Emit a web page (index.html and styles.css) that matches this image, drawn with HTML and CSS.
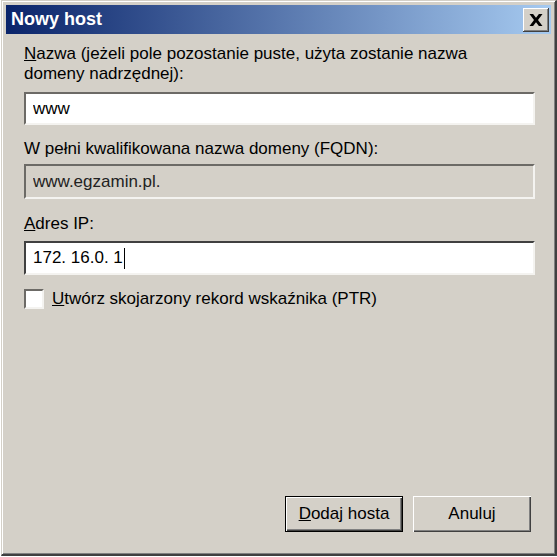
FILE: index.html
```html
<!DOCTYPE html>
<html lang="pl">
<head>
    <meta charset="UTF-8">
    <title>Nowy host</title>
    <link rel="stylesheet" href="styles.css">
</head>
<body>
    <div class="window">
        <div class="title-bar">
            <span class="title">Nowy host</span>
            <button class="close-btn" type="button">
                <svg width="14" height="12" viewBox="0 0 14 12"><path d="M0.5 0h3.6L7 3.8 9.9 0h3.6L9 6l4.5 6H9.9L7 8.2 4.1 12H0.5L5 6z" fill="#000"/></svg>
            </button>
        </div>
        <div class="content">
            <label class="field-label" for="name"><u>N</u>azwa (jeżeli pole pozostanie puste, użyta zostanie nazwa domeny nadrzędnej):</label>
            <input class="field" type="text" id="name" value="www">

            <label class="field-label gap" for="fqdn">W pełni kwalifikowana nazwa domeny (FQDN):</label>
            <input class="field readonly" type="text" id="fqdn" value="www.egzamin.pl." readonly>

            <label class="field-label gap-lg" for="ip"><u>A</u>dres IP:</label>
            <div class="field ip-field"><span>172. 16.0. 1</span><span class="caret"></span></div>

            <label class="check-row">
                <span class="checkbox"></span>
                <span><u>U</u>twórz skojarzony rekord wskaźnika (PTR)</span>
            </label>

            <div class="spacer"></div>

            <div class="buttons">
                <button class="btn default" type="button"><u>D</u>odaj hosta</button>
                <button class="btn" type="button">Anuluj</button>
            </div>
        </div>
    </div>
</body>
</html>
```

FILE: styles.css
```css
body {
    margin: 0;
    background: #fff;
    font-family: "Liberation Sans", Arial, sans-serif;
    font-size: 17px;
    color: #000;
}

.window {
    box-sizing: border-box;
    width: 556px;
    height: 556px;
    margin: 0 0 0 1px;
    padding: 4px;
    background: #d4d0c8;
    border-top: 1px solid #d4d0c8;
    border-left: 1px solid #d4d0c8;
    border-right: 2px solid #404040;
    border-bottom: 2px solid #404040;
    box-shadow: inset 1px 1px 0 #fff, inset -1px -1px 0 #808080;
    display: flex;
    flex-direction: column;
}

.title-bar {
    height: 29px;
    background: linear-gradient(to right, #0a246a, #a6caf0);
    display: flex;
    align-items: center;
    justify-content: space-between;
    padding: 0 2px 0 5px;
}

.title {
    color: #fff;
    font-family: "Liberation Sans", Arial, sans-serif;
    font-weight: bold;
    font-size: 18px;
}

.close-btn {
    width: 26px;
    height: 24px;
    padding: 0;
    background: #d4d0c8;
    border: none;
    box-shadow: inset -1px -1px 0 #404040, inset 1px 1px 0 #fff, inset -2px -2px 0 #808080;
    display: flex;
    align-items: center;
    justify-content: center;
}

.content {
    flex: 1;
    display: flex;
    flex-direction: column;
    padding: 10px 14px 18px 18px;
}

.field-label {
    display: block;
    line-height: 20px;
    padding-right: 40px;
    margin-bottom: 8px;
}

.gap {
    margin-top: 14px;
    margin-bottom: 5px;
}

.gap-lg {
    margin-top: 15px;
    margin-bottom: 7px;
}

.field {
    box-sizing: border-box;
    width: 511px;
    height: 33px;
    margin: 0;
    padding: 0 7px;
    font-family: "Liberation Sans", Arial, sans-serif;
    font-size: 17px;
    color: #000;
    background: #fff;
    border-top: 2px solid #6c6a66;
    border-left: 2px solid #6c6a66;
    border-right: 2px solid #f4f3f0;
    border-bottom: 2px solid #f4f3f0;
    outline: none;
}

.readonly {
    height: 35px;
    background: #d4d0c8;
    color: #222;
}

.ip-field {
    height: 34px;
    display: flex;
    align-items: center;
    border-top-color: #404040;
    border-left-color: #404040;
}

.caret {
    width: 1px;
    height: 21px;
    background: #000;
    margin-left: 1px;
}

.check-row {
    display: flex;
    align-items: center;
    gap: 8px;
    margin-top: 14px;
}

.checkbox {
    box-sizing: border-box;
    width: 20px;
    height: 20px;
    background: #fff;
    border-top: 2px solid #6c6a66;
    border-left: 2px solid #6c6a66;
    border-right: 2px solid #f4f3f0;
    border-bottom: 2px solid #f4f3f0;
}

.spacer {
    flex: 1;
}

.buttons {
    display: flex;
    justify-content: flex-end;
    gap: 10px;
    padding-right: 6px;
}

.btn {
    box-sizing: border-box;
    width: 118px;
    height: 36px;
    font-family: "Liberation Sans", Arial, sans-serif;
    font-size: 17px;
    color: #000;
    background: #d4d0c8;
    border: none;
    box-shadow: inset 1px 1px 0 #fff, inset -1px -1px 0 #404040, inset -2px -2px 0 #808080;
}

.btn.default {
    border: 1px solid #000;
}
```
